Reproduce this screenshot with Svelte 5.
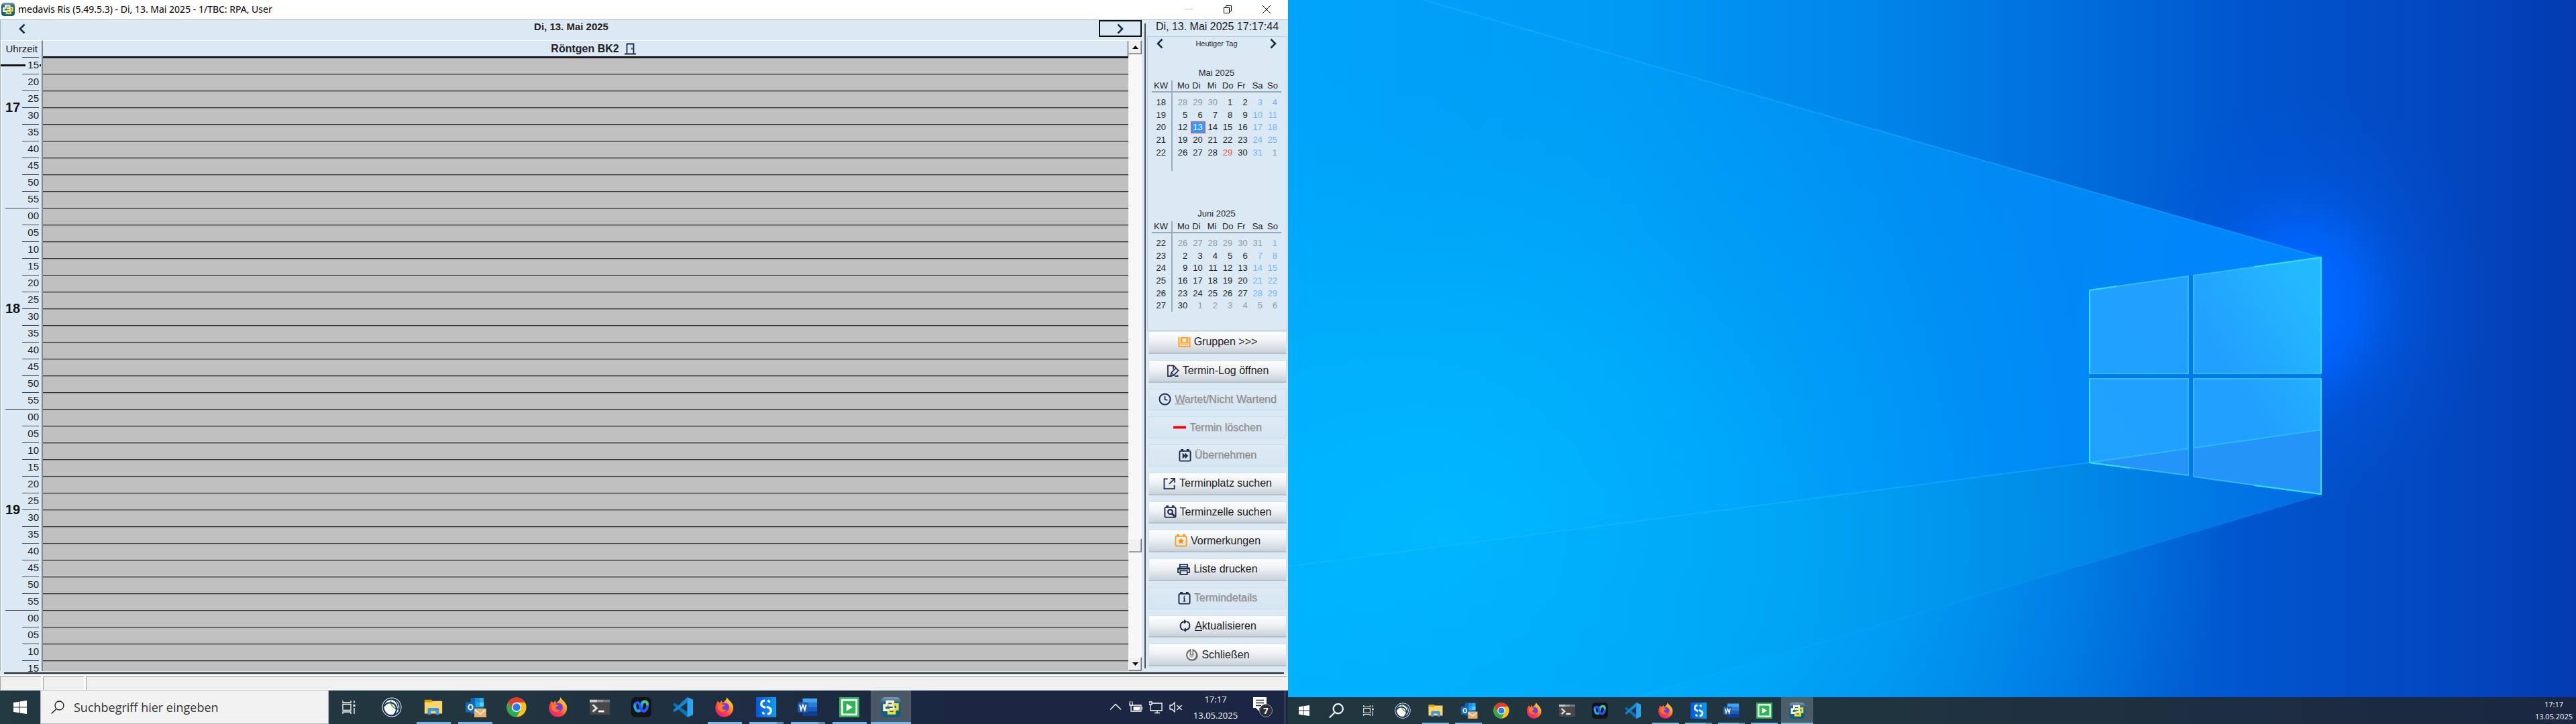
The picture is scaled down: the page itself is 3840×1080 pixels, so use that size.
<script>
  const weekdays = ['Mo', 'Di', 'Mi', 'Do', 'Fr', 'Sa', 'So'];

  const months = [
    {
      title: 'Mai 2025',
      weeks: [
        { kw: 18, days: [28, 29, 30, 1, 2, 3, 4], outside: [0, 1, 2] },
        { kw: 19, days: [5, 6, 7, 8, 9, 10, 11] },
        { kw: 20, days: [12, 13, 14, 15, 16, 17, 18], today: 1 },
        { kw: 21, days: [19, 20, 21, 22, 23, 24, 25] },
        { kw: 22, days: [26, 27, 28, 29, 30, 31, 1], outside: [6], holiday: 3 },
        { kw: '', days: ['', '', '', '', '', '', ''] }
      ]
    },
    {
      title: 'Juni 2025',
      weeks: [
        { kw: 22, days: [26, 27, 28, 29, 30, 31, 1], outside: [0, 1, 2, 3, 4, 5] },
        { kw: 23, days: [2, 3, 4, 5, 6, 7, 8] },
        { kw: 24, days: [9, 10, 11, 12, 13, 14, 15] },
        { kw: 25, days: [16, 17, 18, 19, 20, 21, 22] },
        { kw: 26, days: [23, 24, 25, 26, 27, 28, 29] },
        { kw: 27, days: [30, 1, 2, 3, 4, 5, 6], outside: [1, 2, 3, 4, 5, 6] }
      ]
    }
  ];

  function slots(from, to) {
    const list = [];
    for (let m = from; m <= to; m += 5) list.push(String(m).padStart(2, '0'));
    return list;
  }

  const hours = [
    { label: '17', minutes: slots(15, 55) },
    { label: '18', minutes: slots(0, 55) },
    { label: '19', minutes: slots(0, 55) },
    { label: '', minutes: slots(0, 15) }
  ];

  const actions = [
    { icon: 'group', text: 'Gruppen >>>' },
    { icon: 'log', text: 'Termin-Log öffnen' },
    { icon: 'clock', key: 'W', text: 'artet/Nicht Wartend', off: true },
    { icon: 'minus', text: 'Termin löschen', off: true },
    { icon: 'forward', text: 'Übernehmen', off: true },
    { icon: 'external', text: 'Terminplatz suchen' },
    { icon: 'find', text: 'Terminzelle suchen' },
    { icon: 'star', text: 'Vormerkungen' },
    { icon: 'print', text: 'Liste drucken' },
    { icon: 'info', text: 'Termindetails', off: true },
    { icon: 'refresh', key: 'A', text: 'ktualisieren' },
    { icon: 'power', text: 'Schließen' }
  ];

  const apps = [
    { icon: 'globe', name: 'Browser' },
    { icon: 'folder', name: 'Explorer', state: 'open' },
    { icon: 'outlook', name: 'Outlook', state: 'open' },
    { icon: 'chrome', name: 'Chrome' },
    { icon: 'firefox', name: 'Firefox' },
    { icon: 'terminal', name: 'Terminal' },
    { icon: 'webex', name: 'Webex' },
    { icon: 'code', name: 'Visual Studio Code' },
    { icon: 'firefox', name: 'Firefox', state: 'open' },
    { icon: 'snap', name: 'Studio', state: 'open stacked' },
    { icon: 'word', name: 'Word', state: 'open stacked' },
    { icon: 'play', name: 'Runner', state: 'open' },
    { icon: 'medavis', name: 'medavis Ris', state: 'open active' }
  ];
</script>

{#snippet chevron(dir)}
  <svg class="chevron" viewBox="0 0 10 16" aria-hidden="true">
    <path d={dir === 'left' ? 'M8.5 1.5 2 8l6.5 6.5' : 'M1.5 1.5 8 8l-6.5 6.5'} fill="none" stroke="#1d2b4a" stroke-width="2.6" />
  </svg>
{/snippet}

{#snippet actionIcon(name)}
  <svg class="action-icon" viewBox="0 0 20 20" fill="none" stroke="#1d2b4a" stroke-width="1.8" aria-hidden="true">
    {#if name === 'group'}
      <path d="M1.500 2v15h17V2" stroke="#ff9d14" stroke-width="2" />
      <rect x="6" y="3" width="8" height="8" stroke="#ff9d14" stroke-width="2" />
      <path d="M4 13.500h12M4.300 2v11M15.700 2v11" stroke="#ff9d14" stroke-width="1" />
    {:else if name === 'log'}
      <path d="M8 18H2V1.500h9l4 4M10.500 1.500V7M17.500 16v2H13" />
      <path d="m7.500 12.500 7-7 4 3.500-7 7.500-5 1.500z" />
      <path d="m7.500 12.500 4 4" stroke-width="1.400" />
    {:else if name === 'clock'}
      <circle cx="10" cy="10" r="8.500" stroke-width="2" />
      <path d="M10 5v5.500l4 1" />
    {:else if name === 'minus'}
      <path d="M0 10h20" stroke="#fb0007" stroke-width="4" />
    {:else if name === 'external'}
      <path d="M7 2.500H1.500v15.500h16V12M11.500 2H18v6.500M17.500 2.500 9.500 10.500" />
    {:else if name === 'forward' || name === 'find' || name === 'star' || name === 'info'}
      <g stroke={name === 'star' ? '#ff9d14' : '#1d2b4a'}>
        <rect x="1.500" y="3" width="17" height="15.500" rx="1.500" stroke-width="2" />
        <path d="M3.500 1.200h4M12.500 1.200h4" stroke-width="2.400" />
      </g>
      {#if name === 'forward'}
        <path d="M6.500 6.500v8l3.500-4zM10.500 6.500v8l4-4z" fill="#1d2b4a" stroke-width="1" />
      {:else if name === 'find'}
        <circle cx="10" cy="10" r="3.600" stroke-width="2.200" />
        <path d="m12 12 5 5" stroke-width="3" />
      {:else if name === 'star'}
        <path d="m10 5.500 1.500 3.200 3.500.4-2.600 2.300.7 3.500-3.100-1.800-3.100 1.800.7-3.500L5 9.100l3.500-.4z" fill="#ff8a00" stroke="none" />
      {:else}
        <path d="M8.500 9.500H10v5M8 14.500h4M10 6v2" stroke-width="1.600" />
      {/if}
    {:else if name === 'print'}
      <path d="M4 7V2h12v5M4 15H1V8h18v7h-3M4.500 12h11v6h-11zM4 5h12" />
      <path d="M1 8.500h18" stroke-width="3" />
    {:else if name === 'refresh'}
      <path d="M9.500 3.500C1 4 1 15 7 16.500M10.500 16.500C19 16 19 5 13 3.500" stroke-width="2.200" />
      <path d="m8.500 0 4.500 3.500-4.500 3.500zM11.500 20 7 16.500l4.500-3.500z" fill="#1d2b4a" stroke="none" />
    {:else}
      <ellipse cx="11" cy="12" rx="9" ry="8" fill="#999" stroke="none" />
      <circle cx="10" cy="10.500" r="8" fill="#bdbdbd" stroke="#5d5d5d" stroke-width="1.600" />
      <path d="M6.500 7a5.200 5.200 0 1 0 7 0" stroke="#fff" stroke-width="2" />
      <path d="M10 1v9.500" stroke="#666" stroke-width="4.600" />
      <path d="M10 1v9" stroke="#f5f5f5" stroke-width="2.200" />
    {/if}
  </svg>
{/snippet}

{#snippet knot()}
  <rect width="32" height="32" rx="7" fill="url(#g-medavis)" />
  <g fill="none" stroke-width="4">
    <path d="M10 12V7h9.500v6H12" stroke="#f7f4cf" />
    <path d="M22 20v5.500h-9.500V20H20" stroke="#e9dd3a" />
    <path d="M19.500 11.500h7v7.500h-5" stroke="#e9dd3a" />
    <path d="M12.500 20.500H5.500V13H11" stroke="#f7f4cf" />
    <path d="M20.500 14v4.500H14" stroke="#f7f4cf" stroke-width="3" />
  </g>
{/snippet}

{#snippet appIcon(name)}
  <svg class="app-icon" viewBox="0 0 32 32" aria-hidden="true">
    {#if name === 'globe'}
      <circle cx="16" cy="16" r="15.500" fill="#fff" />
      <circle cx="16" cy="16" r="13.300" fill="none" stroke="#16305a" stroke-width="2.400" />
      <path d="M14.500 4c-1 9 4 15 13 15" fill="none" stroke="#62bf47" stroke-width="2.200" />
      <path d="M4 14C8 8 17 7 21 12s3 12-2 16" fill="none" stroke="#16305a" stroke-width="2.200" />
      <path d="M17 3.500c6 2 10 8 9 17" fill="none" stroke="#16305a" stroke-width="1.600" />
    {:else if name === 'folder'}
      <path d="M2 4h11l2 3v4H2z" fill="#e19c08" />
      <path d="M2 8h11l2-2h15v20H2z" fill="#ffd567" />
      <path d="M7 28V19q0-2 2-2h14q2 0 2 2v9h-5v-6h-8v6z" fill="#3d97e0" />
    {:else if name === 'outlook'}
      <rect x="9" y="1" width="21" height="25" rx="2" fill="#1066b5" />
      <path d="M16 1h7v7h-7z" fill="#1490df" /><path d="M23 8h7v7h-7z" fill="#50d9ff" />
      <path d="M23 1h7v7h-7zM16 8h7v8h-7z" fill="#28a8ea" />
      <rect x="1" y="8" width="16" height="16" rx="2" fill="#0f6cbd" />
      <ellipse cx="9" cy="16" rx="3.300" ry="4" fill="none" stroke="#fff" stroke-width="2.200" />
      <path d="M15 18h19v14H15z" fill="#ecb06a" />
      <path d="m16 20 8.500 7 8-7" fill="none" stroke="#fff" stroke-width="1.600" />
    {:else if name === 'chrome'}
      <circle cx="16" cy="16" r="15.500" fill="#fcc31e" />
      <path d="M2.600 8.200a15.500 15.500 0 0 1 26.800 0H16l-6.700 11.600z" fill="#e33b2e" />
      <path d="M2.600 8.200A15.500 15.500 0 0 0 16 31.500l6.700-11.600-13.400 0z" fill="#2da94f" />
      <circle cx="16" cy="16" r="7.700" fill="#fff" />
      <circle cx="16" cy="16" r="6.100" fill="#2a7de8" />
    {:else if name === 'firefox'}
      <path d="M20 0c1 4 6 6 8.500 11C33 20 27 31 16 31.500 7 31.500 1.500 25 1.500 17 1.500 12 4 9 5 6l3.500 3 3-4 1 4q6-3 7.500-9z" fill="url(#g-fox)" />
      <circle cx="16.500" cy="16" r="7" fill="#7a3cd8" />
      <path d="M6 12c4-2 6 0 10 0 0 3-4 3-4 5s3 4 7 3c-2 5-12 4-14-3z" fill="#ff7a22" />
    {:else if name === 'terminal'}
      <path d="M0 4h32v24H0z" fill="#474747" />
      <path d="M0 4h12v4H0z" fill="#cfcfcf" /><path d="M12 4h10v4H12z" fill="#999" /><path d="M22 4h10v4H22z" fill="#7b7b7b" />
      <path d="m5 12 6 5.500L5 23" fill="none" stroke="#ddd" stroke-width="3.200" />
      <path d="M14 21h9v3h-9z" fill="#fff" />
    {:else if name === 'webex'}
      <rect width="32" height="32" rx="7" fill="#121315" />
      <g fill="none" stroke-width="4.400" stroke-linecap="round">
        <path d="M17 11c1-6 10-5 9 2s-4 10-7 9" stroke="#2f5bf5" />
        <path d="M16 13c1-7 9-8 9.500-2" stroke="#3fd07a" />
        <path d="M7 10c-3 1-1 13 5 12 4-1 4-8 5-12" stroke="#22a4f0" />
        <path d="M7.500 9.500c5-3 6 3 7 7s3 6 5 5" stroke="#2456f5" />
      </g>
    {:else if name === 'code'}
      <path d="m23 0 9 4v24l-9 4L0 12l3-3 20 15z" fill="#0b72b9" />
      <path d="M23 0v8L3 23.500 0 21z" fill="#1785cf" />
      <path d="m23 0 9 4v24l-9 4z" fill="#2aa5f2" />
    {:else if name === 'snap'}
      <path d="M0 0h32v32H0z" fill="url(#g-snap)" />
      <path d="M14 5.500c-7 0-7 8-3 9.500l4 2M18 26.500c7 0 7-8 3-9.500l-4-2" fill="none" stroke="#fff" stroke-width="3.400" />
      <path d="M18.500 5 22 8M10 24l3.500 3" stroke="#fff" stroke-width="3.200" />
    {:else if name === 'word'}
      <path d="M8 2h23v7H8z" fill="#41a5ee" /><path d="M8 9h23v7H8z" fill="#2b7cd3" />
      <path d="M8 16h23v7H8z" fill="#185abd" /><path d="M8 23h23v7H8z" fill="#103f91" />
      <rect x="0" y="8" width="17" height="16" rx="2" fill="#1c5cbf" />
      <path d="m3.500 12 2 8.500 3-8 3 8 2-8.500" fill="none" stroke="#fff" stroke-width="2" />
    {:else if name === 'play'}
      <path d="M0 0h32v32H0z" fill="#2cb553" />
      <path d="M4.500 4.500h23v23h-23z" fill="#2cb553" stroke="#fff" stroke-width="3" />
      <path d="m11.500 10 10 6-10 6z" fill="#fff" />
    {:else}
      {@render knot()}
    {/if}
  </svg>
{/snippet}

{#snippet startIcon()}
  <svg class="start-icon" viewBox="0 0 20 20" fill="#fff" aria-hidden="true">
    <path d="m0 3 8.500-1.300V9.500H0zM9.500 1.500 20 0v9.500H9.500zM0 10.500h8.500v7.800L0 17zM9.500 10.500H20V20L9.500 18.500z" />
  </svg>
{/snippet}

{#snippet searchIcon()}
  <svg class="search-icon" viewBox="0 0 20 20" fill="none" stroke="currentColor" aria-hidden="true">
    <circle cx="12.500" cy="7.500" r="6.500" /><path d="M8 12.500.7 19.500" />
  </svg>
{/snippet}

{#snippet taskViewIcon()}
  <svg class="view-icon" viewBox="0 0 20 20" fill="none" stroke="#fff" stroke-width="1.300" aria-hidden="true">
    <path d="M1 5.500h12v9H1zM1 0v3h12V0M1 20v-3h12v3M18 0v4M18 11v9" />
    <path d="M16.500 6h3v3h-3z" fill="#fff" stroke="none" />
  </svg>
{/snippet}

{#snippet appButtons()}
  <div class="apps">
    {#each apps as app}
      <button class="app {app.state ?? ''}" aria-label={app.name}>{@render appIcon(app.icon)}</button>
    {/each}
  </div>
{/snippet}

<svg class="defs" aria-hidden="true">
  <defs>
    <linearGradient id="g-fox" x1="1" y1="0" x2="0.200" y2="1">
      <stop offset="0" stop-color="#fff34f" /><stop offset="0.400" stop-color="#ff9a26" />
      <stop offset="0.700" stop-color="#ff3f47" /><stop offset="1" stop-color="#e11d8a" />
    </linearGradient>
    <linearGradient id="g-snap" x1="0" y1="0" x2="1" y2="0">
      <stop offset="0" stop-color="#0057e0" /><stop offset="1" stop-color="#109cf2" />
    </linearGradient>
    <linearGradient id="g-medavis" x1="0" y1="0" x2="0" y2="1">
      <stop offset="0" stop-color="#7da0b8" /><stop offset="0.300" stop-color="#1f5f84" /><stop offset="1" stop-color="#0d5f80" />
    </linearGradient>
  </defs>
</svg>

<div class="screens">
  <div class="screen">
    <main class="window">
      <header class="titlebar">
        <svg class="title-icon" viewBox="0 0 32 32" aria-hidden="true">{@render knot()}</svg>
        <h1>medavis Ris (5.49.5.3) - Di, 13. Mai 2025 - 1/TBC: RPA, User</h1>
        <button aria-label="Minimieren"><svg viewBox="0 0 12 12"><path d="M0 5.500h12" stroke="#c4c4c4" /></svg></button>
        <button aria-label="Verkleinern"><svg viewBox="0 0 12 12"><path d="M.5 3.500h8v8h-8zM3.500 3V.5h8v8H9" stroke="#000" /></svg></button>
        <button aria-label="Fenster schließen"><svg viewBox="0 0 12 12"><path d="m0 0 12 12M12 0 0 12" stroke="#000" /></svg></button>
      </header>

      <div class="content">
        <section class="scheduler">
          <div class="daybar">
            <button class="prev" aria-label="Vorheriger Tag">{@render chevron('left')}</button>
            <h2>Di, 13. Mai 2025</h2>
            <button class="next" aria-label="Nächster Tag">{@render chevron('right')}</button>
          </div>
          <div class="board">
            <div class="times">
              <div class="times-head">Uhrzeit</div>
              <div class="times-body">
                {#each hours as hour, h}
                  <div class="hour" class:first={h === 0}>
                    <div class="hour-label">{hour.label}</div>
                    <div class="minutes">
                      {#each hour.minutes as minute, i}
                        <div class="minute" class:now={h === 0 && i === 0}><span>{minute}</span></div>
                      {/each}
                    </div>
                  </div>
                {/each}
              </div>
            </div>
            <div class="room">
              <div class="room-head">
                <span>Röntgen BK2</span>
                <svg viewBox="0 0 17 18" fill="none" stroke="#1d2b4a" stroke-width="1.800" aria-hidden="true">
                  <path d="M3.500 16V1.500h10V16M0 16.500h17" /><path d="M11 7v3" stroke-width="1.500" />
                </svg>
              </div>
              <div class="room-body">
                {#each hours as hour}
                  {#each hour.minutes as minute}<div class="slot"></div>{/each}
                {/each}
              </div>
            </div>
            <div class="scroll">
              <button aria-label="Nach oben"><svg viewBox="0 0 9 5"><path d="M4.500 0 9 5H0z" /></svg></button>
              <div class="track"><div class="thumb"></div></div>
              <button aria-label="Nach unten"><svg viewBox="0 0 9 5"><path d="M0 0h9L4.500 5z" /></svg></button>
            </div>
          </div>
        </section>

        <aside class="sidebar">
          <div class="now-text">Di, 13. Mai 2025 17:17:44</div>
          <div class="calendars">
            <div class="today-nav">
              <button aria-label="Zurück">{@render chevron('left')}</button>
              <span>Heutiger Tag</span>
              <button aria-label="Weiter">{@render chevron('right')}</button>
            </div>
            {#each months as month}
              <div class="month">
                <h3>{month.title}</h3>
                <table>
                  <colgroup><col class="c-kw" /><col /><col /><col /><col /><col /><col /><col class="c-last" /></colgroup>
                  <thead>
                    <tr><th>KW</th>{#each weekdays as d}<th>{d}</th>{/each}</tr>
                  </thead>
                  <tbody>
                    {#each month.weeks as week}
                      <tr>
                        <td>{week.kw}</td>
                        {#each week.days as day, i}
                          <td class:weekend={i > 4} class:outside={week.outside?.includes(i)} class:holiday={week.holiday === i}>
                            {#if week.today === i}<mark>{day}</mark>{:else}{day}{/if}
                          </td>
                        {/each}
                      </tr>
                    {/each}
                  </tbody>
                </table>
              </div>
            {/each}
          </div>
          <div class="actions">
            {#each actions as a}
              <button disabled={a.off}>{@render actionIcon(a.icon)}<span>{#if a.key}<u>{a.key}</u>{/if}{a.text}</span></button>
            {/each}
          </div>
        </aside>
      </div>

      <div class="baseline"></div>
      <footer class="status"><span></span><span></span><span></span></footer>
    </main>

    <nav class="taskbar primary" aria-label="Taskleiste">
      <button class="tool" aria-label="Start">{@render startIcon()}</button>
      <label class="search">
        {@render searchIcon()}
        <input type="text" placeholder="Suchbegriff hier eingeben" aria-label="Suche" />
      </label>
      <button class="tool" aria-label="Taskansicht">{@render taskViewIcon()}</button>
      {@render appButtons()}
      <div class="tray">
        <svg viewBox="0 0 20 20"><path d="m2 13.500 8-8 8 8" /></svg>
        <svg viewBox="0 0 20 20"><path d="M5 7h13v9H3V10" /><path d="M6.500 9h10v5.500h-10z" fill="#fff" stroke="none" /><path d="M19.500 9.500v4M1 3v4h4V3M1.500 1v2M4.500 1v2M3 7v3" /></svg>
        <svg viewBox="0 0 20 20"><path d="M4 4h15v11H2V8M8 18.500h8M12 15v3.500M0 2h4v4H0zM2 6v3" /></svg>
        <svg viewBox="0 0 20 20"><path d="M1 7h3l4-4v14l-4-4H1zM11.500 7l7 7M18.500 7l-7 7" /></svg>
      </div>
      <div class="clock"><span>17:17</span><span>13.05.2025</span></div>
      <button class="notes" aria-label="Benachrichtigungen">
        <svg viewBox="0 0 32 32" aria-hidden="true"><path d="M1 1h20v16H10v5l-5-5H1z" fill="#fff" /><path d="M5 5.500h12M5 9.500h12M5 13.500h8" stroke="#1b2742" stroke-width="1.300" /></svg>
        <b>7</b>
      </button>
      <div class="peek"></div>
    </nav>
  </div>

  <div class="screen">
    <svg class="wallpaper" viewBox="0 0 1920 1040" preserveAspectRatio="xMidYMid slice" aria-hidden="true">
      <defs>
        <linearGradient id="w-base" x1="0" x2="1" y1="0" y2="0">
          <stop offset="0" stop-color="#00a4fb" /><stop offset="0.250" stop-color="#009bf5" />
          <stop offset="0.450" stop-color="#0086ea" /><stop offset="0.600" stop-color="#006fdd" />
          <stop offset="0.750" stop-color="#0054cd" /><stop offset="0.880" stop-color="#0349c2" />
          <stop offset="1" stop-color="#033bb2" />
        </linearGradient>
        <radialGradient id="w-left" gradientUnits="userSpaceOnUse" cx="0" cy="0" r="1" gradientTransform="translate(250 800) scale(1150 720)">
          <stop offset="0" stop-color="#00b9ff" /><stop offset="0.400" stop-color="#00b3fd" stop-opacity="0.800" />
          <stop offset="1" stop-color="#00a6f6" stop-opacity="0" />
        </radialGradient>
        <radialGradient id="w-glow" gradientUnits="userSpaceOnUse" cx="0" cy="0" r="1" gradientTransform="translate(1510 450) scale(280 320)">
          <stop offset="0" stop-color="#006cff" /><stop offset="0.300" stop-color="#0066ff" stop-opacity="0.850" />
          <stop offset="0.600" stop-color="#005ae6" stop-opacity="0.350" /><stop offset="1" stop-color="#0052d8" stop-opacity="0" />
        </radialGradient>
        <linearGradient id="w-beam" gradientUnits="userSpaceOnUse" x1="200" y1="0" x2="1540" y2="0">
          <stop offset="0" stop-color="#00aeff" stop-opacity="0" /><stop offset="0.400" stop-color="#009cfa" stop-opacity="0.500" />
          <stop offset="0.700" stop-color="#008cf8" stop-opacity="0.900" /><stop offset="1" stop-color="#0084ff" />
        </linearGradient>
        <linearGradient id="w-lower" gradientUnits="userSpaceOnUse" x1="0" y1="0" x2="1540" y2="0">
          <stop offset="0" stop-color="#00b4ff" stop-opacity="0.300" /><stop offset="0.500" stop-color="#00a2f2" stop-opacity="0.600" />
          <stop offset="0.750" stop-color="#008ee8" stop-opacity="0.800" /><stop offset="1" stop-color="#006ce4" />
        </linearGradient>
        <linearGradient id="w-line" gradientUnits="userSpaceOnUse" x1="0" y1="0" x2="1540" y2="0">
          <stop offset="0" stop-color="#3cc4ff" stop-opacity="0.250" /><stop offset="1" stop-color="#22a8ff" stop-opacity="0.500" />
        </linearGradient>
        <linearGradient id="w-pane" gradientUnits="userSpaceOnUse" x1="1194" y1="690" x2="1540" y2="470">
          <stop offset="0" stop-color="#1fa2ff" /><stop offset="0.600" stop-color="#219fff" /><stop offset="1" stop-color="#24b8ff" />
        </linearGradient>
      </defs>
      <rect width="1920" height="1040" fill="url(#w-base)" />
      <rect width="1920" height="1040" fill="url(#w-left)" />
      <rect width="1920" height="1040" fill="url(#w-glow)" />
      <path d="M0 845 1195 690 1540 738 517 1040H0z" fill="url(#w-lower)" />
      <path d="M202 0 1540 384V641L1195 690 0 845V0z" fill="url(#w-beam)" />
      <g fill="none" stroke="url(#w-line)" stroke-width="2">
        <path d="M202 0 1540 384M0 845 1195 690" /><path d="M1540 738 517 1040" opacity="0.300" />
      </g>
      <path d="M1195 432 1540 384V738L1195 690z" fill="#0079ea" />
      <g fill="url(#w-pane)" stroke="#35bbff" stroke-width="2">
        <path d="m1195 433 147-21v145h-147zM1350 411l190-27v173h-190zM1195 565h147v144l-147-19zM1350 565h190v172l-190-26z" />
      </g>
      <path d="m1196 689 146-20v39zM1350 668l189-27v95l-189-26z" fill="#2494f8" />
      <path d="m1195 690 147-21M1350 668l190-27" stroke="#2bbcff" stroke-width="2" />
      <g fill="none" stroke="#32e0ff" stroke-width="2">
        <path d="M1195 557V433l40-6M1195 565v125l60 8M1540 565v172l-100-13" />
        <path d="M1440 398l100-14v173" />
      </g>
    </svg>
    <nav class="taskbar secondary" aria-label="Taskleiste rechts">
      <button class="tool" aria-label="Start">{@render startIcon()}</button>
      <button class="tool" aria-label="Suche">{@render searchIcon()}</button>
      <button class="tool" aria-label="Taskansicht">{@render taskViewIcon()}</button>
      {@render appButtons()}
      <div class="clock"><span>17:17</span><span>13.05.2025</span></div>
    </nav>
  </div>
</div>

<style>
  :global(body) { margin: 0; background: #00aeff; }
  * { box-sizing: border-box; }
  button { margin: 0; padding: 0; border: 0; background: none; font: inherit; color: inherit; }
  h1, h2, h3 { margin: 0; font-size: inherit; font-weight: normal; }
  svg { display: block; }
  .defs { position: absolute; width: 0; height: 0; }

  .screens { display: flex; height: 100vh; font-family: "Liberation Sans", Arial, sans-serif; color: #222; }
  .screen { flex: 1; min-width: 0; display: flex; flex-direction: column; }
  .window { flex: 1; min-height: 0; display: flex; flex-direction: column; background: #dbe9f4; }

  .titlebar { height: 30px; flex: none; display: flex; align-items: center; padding: 0 3px 2px 2px; background: #fff; border-bottom: 1px solid #a9bcc8; }
  .title-icon { width: 20px; height: 20px; }
  .titlebar h1 { flex: 1; margin-left: 5px; font: 14px/20px "Noto Sans", "Open Sans", sans-serif; color: #000; }
  .titlebar button { width: 58px; height: 28px; display: grid; place-items: center; }
  .titlebar button svg { width: 12px; height: 12px; fill: none; }

  .content { flex: 1; min-height: 0; display: flex; }
  .scheduler { flex: 1; min-width: 0; display: flex; flex-direction: column; border-left: 1px solid #9fb2c0; }
  .daybar { height: 30px; flex: none; display: flex; align-items: flex-start; justify-content: space-between; }
  .daybar button { width: 64px; height: 25px; display: grid; place-items: center; }
  .daybar .next { border: 2px solid #111; }
  .daybar h2 { font-size: 15px; font-weight: bold; line-height: 20px; }
  .chevron { width: 10px; height: 16px; }

  .board { flex: 1; min-height: 0; display: flex; }
  .times { width: 63px; flex: none; display: flex; flex-direction: column; border-top: 1px solid #fff; border-left: 2px solid #f0f6fa; border-right: 2px solid #808890; font-size: 15px; }
  .times-head { height: 24px; flex: none; line-height: 23px; padding-right: 6px; text-align: right; }
  .times-body { flex: 1; min-height: 0; }
  .hour { display: flex; align-items: flex-end; position: relative; margin-left: 5px; background: linear-gradient(#444, #444) 0 0 / 49px 1px no-repeat; }
  .hour.first { background: none; }
  .hour-label { width: 25px; height: 24px; margin-bottom: 138px; font-size: 20px; font-weight: bold; line-height: 24px; color: #111; }
  .hour:last-child { height: 90px; }
  .hour:last-child .hour-label { margin: 0; }
  .hour:last-child .minutes { align-self: flex-start; }
  .minutes { width: 25px; }
  .minute { height: 25px; line-height: 21px; text-align: right; border-top: 1px solid #444; }
  .minute.now::before { content: ""; position: absolute; left: -7px; top: 11px; width: 37px; height: 3px; background: #111; }
  .minute.now::after { content: ""; position: absolute; left: 51px; top: 11px; width: 2px; height: 3px; background: #111; }

  .room { flex: 1; min-width: 0; display: flex; flex-direction: column; border-top: 1px solid #fff; }
  .room-head { height: 25px; flex: none; display: flex; align-items: center; justify-content: center; gap: 8px; padding-left: 24px; font-size: 16px; font-weight: bold; border-right: 1px solid #111; border-bottom: 2px solid #111; }
  .room-head svg { width: 17px; height: 18px; }
  .room-body { flex: 1; min-height: 0; overflow: hidden; background: #c0c0c0; margin-top: -1px; }
  .slot { height: 25px; border-top: 1px solid #333; box-shadow: inset 0 1px #909090; }
  .slot:first-child { border-color: #111; box-shadow: inset 0 1px #333; }

  .scroll { width: 20px; flex: none; display: flex; flex-direction: column; background: #f7f7f7; }
  .scroll button, .thumb { height: 21px; flex: none; display: grid; place-items: center; background: #f0f0f0; border: 1px solid; border-color: #fff #777 #777 #fff; box-shadow: inset -1px -1px #a8a8a8; }
  .scroll svg { width: 9px; height: 5px; fill: #000; }
  .track { flex: 1; display: flex; flex-direction: column; justify-content: flex-end; padding-bottom: 156px; }

  .sidebar { width: 218px; flex: none; display: flex; flex-direction: column; padding: 0 1px 7px 5px; background: linear-gradient(#4b5259, #4b5259) 4px 5px / 2px 962px no-repeat; }
  .now-text { height: 24px; flex: none; line-height: 19px; font-size: 16px; text-align: center; padding-left: 3px; }
  .calendars { flex: none; height: 439px; margin-left: 3px; padding: 0 8px 0 6px; border: 1px solid #bccfdc; }
  .today-nav { height: 42px; display: flex; align-items: flex-start; justify-content: space-between; font-size: 11px; line-height: 20px; }
  .today-nav button { width: 24px; padding: 2px 7px 0; }
  .month { height: 210px; font-size: 13px; }
  .month h3 { height: 23px; line-height: 23px; text-align: center; }
  table { width: 100%; table-layout: fixed; border-collapse: separate; border-spacing: 0; line-height: 16px; }
  .c-kw { width: 31px; }
  .c-last { width: 28px; }
  th, td { padding: 0; font-weight: normal; white-space: nowrap; }
  th { height: 18px; text-align: left; padding-left: 7px; border-bottom: 2px solid #9aacba; }
  th:first-child { padding-left: 3px; }
  th:first-child, td:first-child { border-right: 2px solid #9aacba; }
  td { height: 19px; text-align: right; }
  tr:nth-child(3n) td { height: 18px; }
  tbody tr:first-child td { height: 24px; padding-top: 5px; }
  td:first-child { padding-right: 8px; }
  td:last-child { padding-right: 6px; }
  .weekend { color: #72b4ff; }
  .outside { color: #8e9aa5; }
  .holiday { color: #f0564a; }
  tr:first-child .outside + .weekend:last-child { color: #72b4ff; }
  mark { display: inline-block; margin: 0 -4px 0 0; padding: 0 3px 0 2px; background: #3399ff; color: #fff; border: 1px solid #e8554a; }

  .actions { flex: 1; min-height: 0; display: flex; flex-direction: column; gap: 9px; margin: 1px 1px 0 5px; }
  .actions button { flex: 1; min-height: 0; display: flex; align-items: center; justify-content: center; gap: 5px; font-size: 16px; background: linear-gradient(#fff, #eef1f4 45%, #c9d1d9); border: 1px solid #d2e0ea; border-bottom: 2px solid #b4c0ca; }
  .actions button:disabled { color: #8b8b8b; background: linear-gradient(#dfebf4, #d5e5f2); border: 1px solid #c9ddeb; text-shadow: 1px 1px #c4c8cc; }
  .action-icon { width: 19px; height: 19px; }

  .baseline { height: 6px; flex: none; margin: 0 6px; background: linear-gradient(#222, #222) 0 2px / 100% 2px no-repeat; }
  .status { height: 23px; flex: none; display: flex; gap: 3px; padding: 2px 1px 1px 0; background: #fafafa; }
  .status span { background: #f0f0f0; border-top: 1px solid #a0a0a0; border-left: 1px solid #a0a0a0; width: 61px; }
  .status span:last-child { flex: 1; }

  .taskbar { flex: none; display: flex; color: #fff; font-family: "Open Sans", "Noto Sans", sans-serif; background: linear-gradient(90deg, #223941, #22363f 35%, #1b2742 75%, #1a2643); }
  .taskbar .tool { flex: none; display: grid; place-items: center; }
  .apps { display: flex; }
  .app { display: grid; place-items: center; background-repeat: no-repeat; background-position: bottom; }
  .app-icon { overflow: visible; }
  .clock { display: flex; flex-direction: column; align-items: center; justify-content: center; white-space: nowrap; }

  .primary { height: 50px; }
  .primary .tool { width: 60px; }
  .primary .start-icon, .primary .view-icon { width: 20px; height: 20px; }
  .search { width: 430px; display: flex; align-items: center; gap: 14px; padding: 0 15px; background: #f2f2f2; border: 1px solid #bbb; color: #111; }
  .search .search-icon { width: 20px; height: 20px; flex: none; stroke-width: 1.300; }
  .search input { flex: 1; min-width: 0; padding: 0; border: 0; outline: 0; background: none; font: 18px/24px "Open Sans", "Noto Sans", sans-serif; color: #333; }
  .search input::placeholder { color: #333; opacity: 1; }
  .primary .apps { flex: 1; gap: 2px; margin-left: 4px; }
  .primary .app { width: 60px; }
  .primary .app-icon { width: 30px; height: 30px; }
  .primary .open { background-image: linear-gradient(#76b9ed, #76b9ed); background-size: 51px 3px; }
  .primary .stacked { background-image: linear-gradient(90deg, #76b9ed 41px, #5b8fb8 41px); }
  .primary .active { background-color: #4c5765; background-size: 100% 3px; }
  .tray { display: flex; align-items: center; gap: 10px; }
  .tray svg { width: 20px; height: 20px; fill: none; stroke: #fff; stroke-width: 1.300; }
  .primary .clock { width: 98px; font-size: 13px; line-height: 24px; }
  .notes { width: 54px; display: flex; align-items: center; padding-left: 6px; }
  .notes svg { width: 32px; height: 32px; }
  .notes b { width: 20px; height: 20px; margin: 10px 0 0 -22px; border: 1px solid #999; border-radius: 50%; background: #2b2f3c; font-size: 13px; line-height: 18px; text-align: center; }
  .peek { width: 5px; border-left: 1px solid #6d7686; }

  .wallpaper { flex: 1; min-height: 0; width: 100%; }
  .secondary { height: 40px; background: linear-gradient(90deg, #21373f, #20343f 45%, #1b2742); }
  .secondary .tool { width: 48px; }
  .secondary .start-icon, .secondary .view-icon { width: 16px; height: 16px; }
  .secondary .search-icon { width: 22px; height: 22px; stroke-width: 2; }
  .secondary .apps { flex: 1; gap: 1px; margin-left: 3px; }
  .secondary .app { width: 48px; }
  .secondary .app-icon { width: 24px; height: 24px; }
  .secondary .open { background-image: linear-gradient(#76b9ed, #76b9ed); background-size: 40px 2px; }
  .secondary .stacked { background-image: linear-gradient(90deg, #76b9ed 31px, #5b8fb8 31px); }
  .secondary .active { background-color: #4c5f68; background-size: 100% 2px; }
  .secondary .clock { padding-right: 5px; font-size: 11px; line-height: 18px; }
</style>
